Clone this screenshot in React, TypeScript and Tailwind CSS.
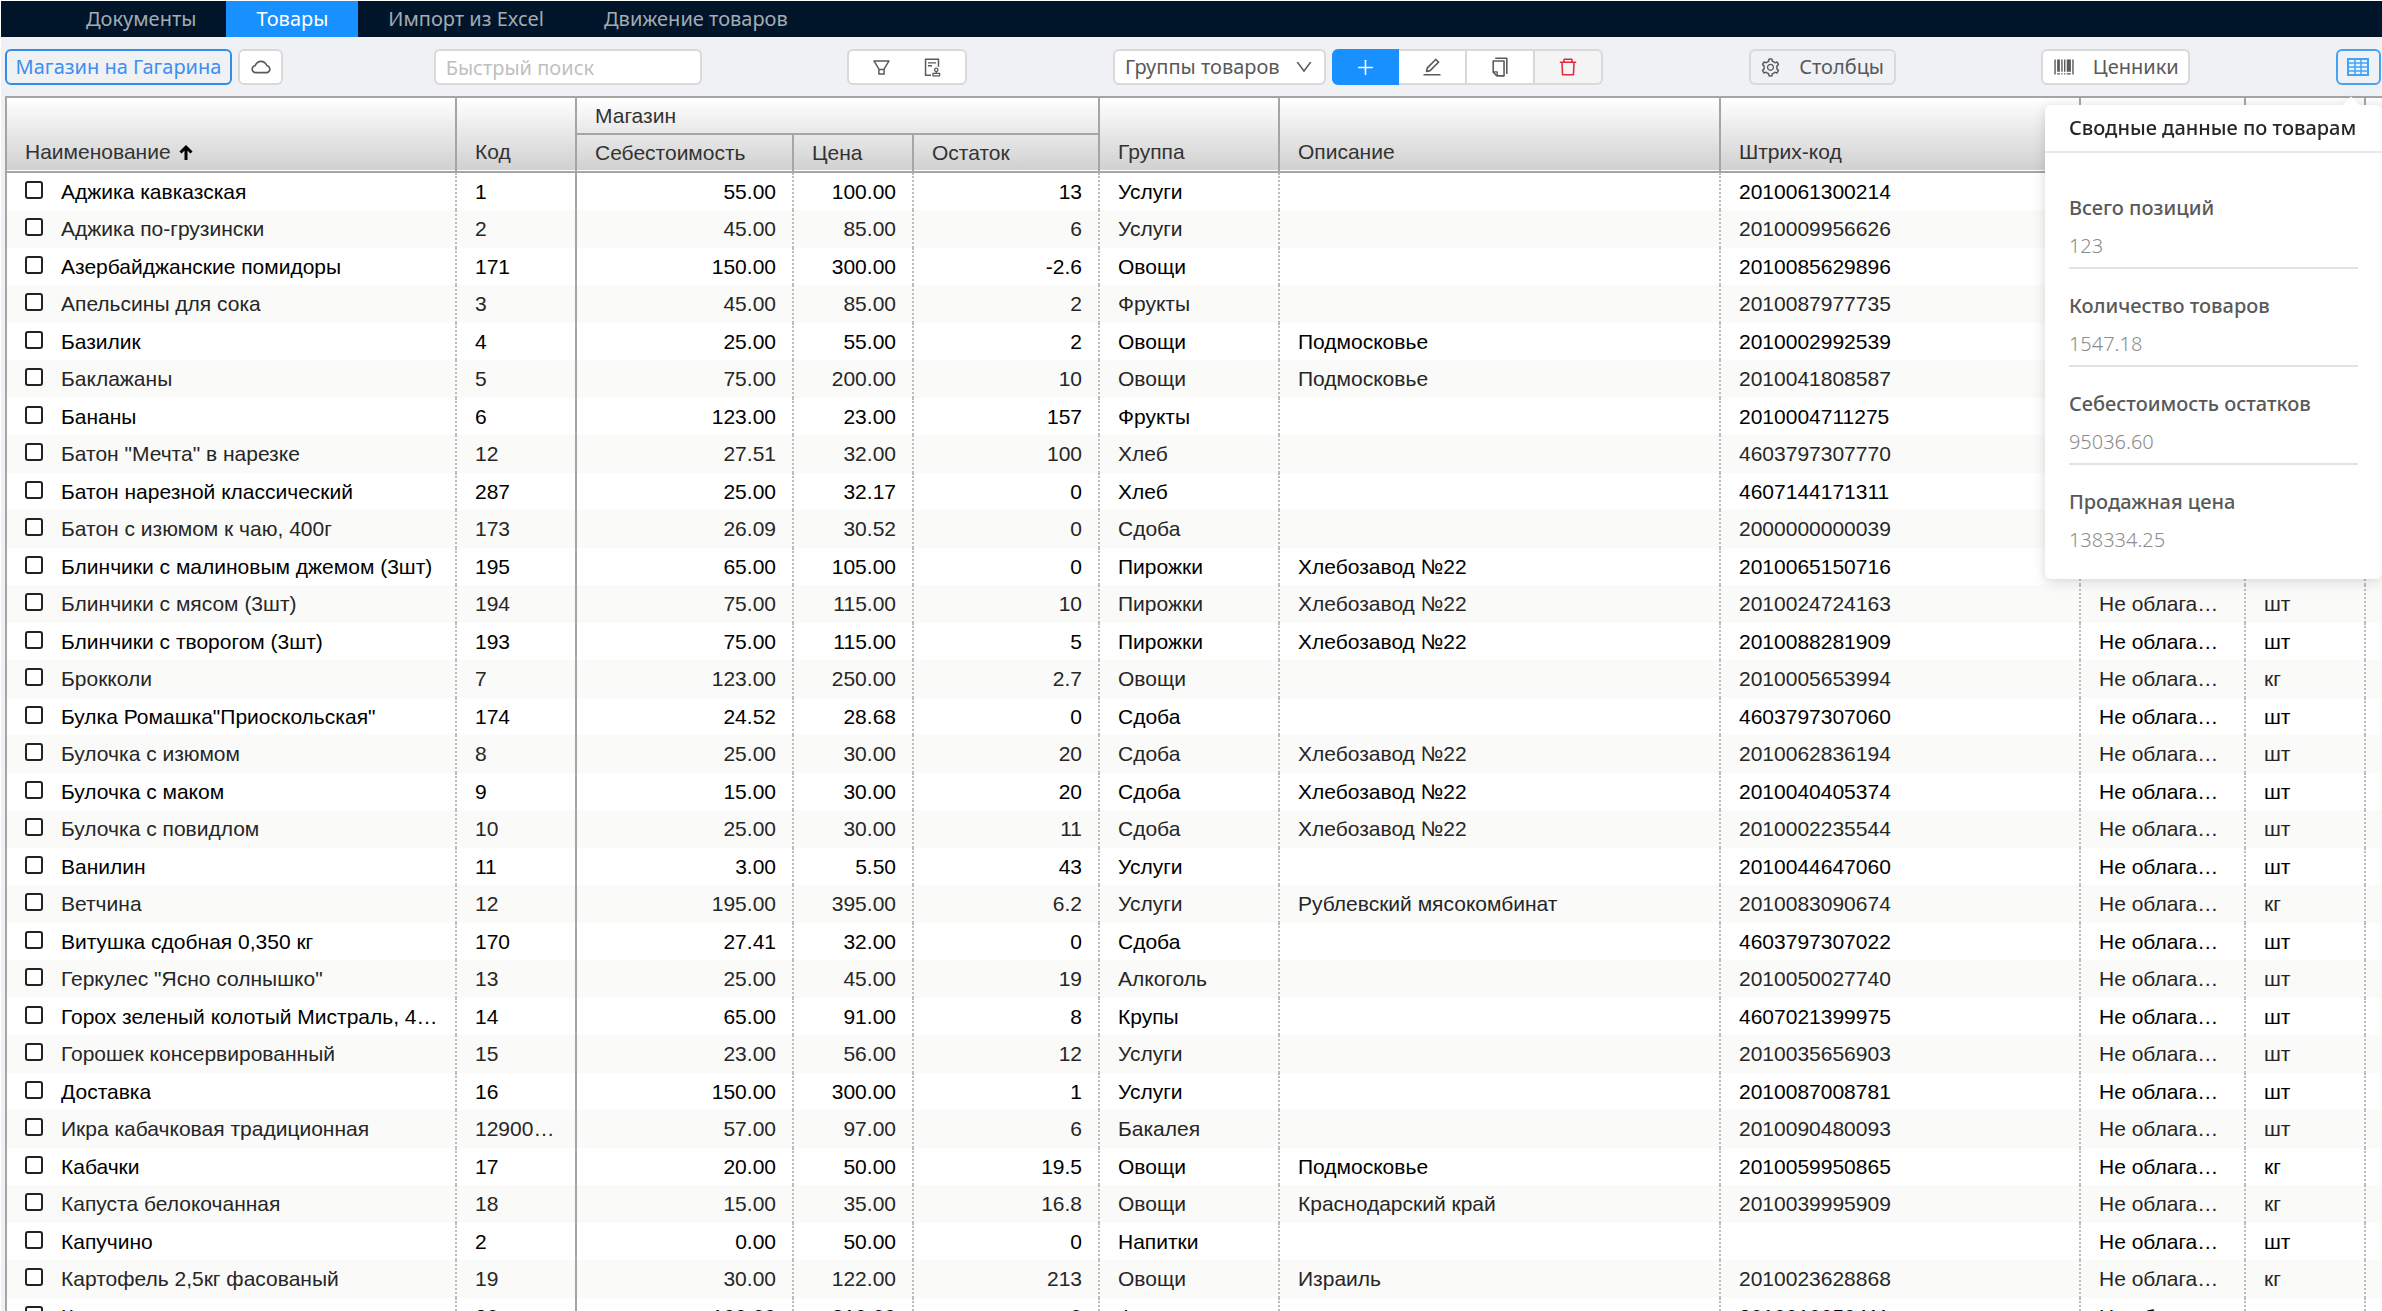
import { ReactNode } from "react";
import clsx from "clsx";
import {
  AiOutlineAudit,
  AiOutlineBarcode,
  AiOutlineCloud,
  AiOutlineCopy,
  AiOutlineDelete,
  AiOutlineDown,
  AiOutlineEdit,
  AiOutlineFilter,
  AiOutlinePlus,
  AiOutlineSetting,
} from "react-icons/ai";

type Product = [
  name: string,
  code: string,
  cost: string,
  price: string,
  stock: string,
  group: string,
  description: string,
  barcode: string,
  unit: string,
];

const products: Product[] = [
  ["Аджика кавказская", "1", "55.00", "100.00", "13", "Услуги", "", "2010061300214", "шт"],
  ["Аджика по-грузински", "2", "45.00", "85.00", "6", "Услуги", "", "2010009956626", "шт"],
  ["Азербайджанские помидоры", "171", "150.00", "300.00", "-2.6", "Овощи", "", "2010085629896", "кг"],
  ["Апельсины для сока", "3", "45.00", "85.00", "2", "Фрукты", "", "2010087977735", "кг"],
  ["Базилик", "4", "25.00", "55.00", "2", "Овощи", "Подмосковье", "2010002992539", "шт"],
  ["Баклажаны", "5", "75.00", "200.00", "10", "Овощи", "Подмосковье", "2010041808587", "кг"],
  ["Бананы", "6", "123.00", "23.00", "157", "Фрукты", "", "2010004711275", "кг"],
  ["Батон \"Мечта\" в нарезке", "12", "27.51", "32.00", "100", "Хлеб", "", "4603797307770", "шт"],
  ["Батон нарезной классический", "287", "25.00", "32.17", "0", "Хлеб", "", "4607144171311", "шт"],
  ["Батон с изюмом к чаю, 400г", "173", "26.09", "30.52", "0", "Сдоба", "", "2000000000039", "шт"],
  ["Блинчики с малиновым джемом (3шт)", "195", "65.00", "105.00", "0", "Пирожки", "Хлебозавод №22", "2010065150716", "шт"],
  ["Блинчики с мясом (3шт)", "194", "75.00", "115.00", "10", "Пирожки", "Хлебозавод №22", "2010024724163", "шт"],
  ["Блинчики с творогом (3шт)", "193", "75.00", "115.00", "5", "Пирожки", "Хлебозавод №22", "2010088281909", "шт"],
  ["Брокколи", "7", "123.00", "250.00", "2.7", "Овощи", "", "2010005653994", "кг"],
  ["Булка Ромашка\"Приоскольская\"", "174", "24.52", "28.68", "0", "Сдоба", "", "4603797307060", "шт"],
  ["Булочка с изюмом", "8", "25.00", "30.00", "20", "Сдоба", "Хлебозавод №22", "2010062836194", "шт"],
  ["Булочка с маком", "9", "15.00", "30.00", "20", "Сдоба", "Хлебозавод №22", "2010040405374", "шт"],
  ["Булочка с повидлом", "10", "25.00", "30.00", "11", "Сдоба", "Хлебозавод №22", "2010002235544", "шт"],
  ["Ванилин", "11", "3.00", "5.50", "43", "Услуги", "", "2010044647060", "шт"],
  ["Ветчина", "12", "195.00", "395.00", "6.2", "Услуги", "Рублевский мясокомбинат", "2010083090674", "кг"],
  ["Витушка сдобная 0,350 кг", "170", "27.41", "32.00", "0", "Сдоба", "", "4603797307022", "шт"],
  ["Геркулес \"Ясно солнышко\"", "13", "25.00", "45.00", "19", "Алкоголь", "", "2010050027740", "шт"],
  ["Горох зеленый колотый Мистраль, 450г", "14", "65.00", "91.00", "8", "Крупы", "", "4607021399975", "шт"],
  ["Горошек консервированный", "15", "23.00", "56.00", "12", "Услуги", "", "2010035656903", "шт"],
  ["Доставка", "16", "150.00", "300.00", "1", "Услуги", "", "2010087008781", "шт"],
  ["Икра кабачковая традиционная", "12900451", "57.00", "97.00", "6", "Бакалея", "", "2010090480093", "шт"],
  ["Кабачки", "17", "20.00", "50.00", "19.5", "Овощи", "Подмосковье", "2010059950865", "кг"],
  ["Капуста белокочанная", "18", "15.00", "35.00", "16.8", "Овощи", "Краснодарский край", "2010039995909", "кг"],
  ["Капучино", "2", "0.00", "50.00", "0", "Напитки", "", "", "шт"],
  ["Картофель 2,5кг фасованый", "19", "30.00", "122.00", "213", "Овощи", "Израиль", "2010023628868", "кг"],
  ["Киви", "20", "100.00", "210.00", "0", "Фрукты", "", "2010010050411", "кг"],
];

const tabs = ["Документы", "Товары", "Импорт из Excel", "Движение товаров"];

const summary = [
  ["Всего позиций", "123"],
  ["Количество товаров", "1547.18"],
  ["Себестоимость остатков", "95036.60"],
  ["Продажная цена", "138334.25"],
];

function TopMenu() {
  return (
    <nav className="flex h-9 shrink-0 bg-[#001529] pl-[55px] text-[20px] leading-9">
      {tabs.map((tab) => (
        <a
          key={tab}
          href="#"
          className={clsx("px-[30px]", tab === "Товары" ? "bg-[#1890ff] text-white" : "text-[#a3abb3]")}
        >
          {tab}
        </a>
      ))}
    </nav>
  );
}

function TableIcon() {
  return (
    <svg viewBox="0 0 22 18" className="h-[18px] w-[22px]" fill="#e6f4ff" stroke="currentColor" strokeWidth="2">
      <rect x="1" y="1" width="20" height="16" />
      <path d="M1 5h20M1 9h20M1 13h20M8 1v16M14 1v16" strokeWidth="1.500" />
    </svg>
  );
}

function ToolButton({ label, className, children }: { label?: string; className?: string; children: ReactNode }) {
  return (
    <button
      type="button"
      aria-label={label}
      className={clsx("flex h-9 items-center justify-center border-2", className)}
    >
      {children}
    </button>
  );
}

function Toolbar() {
  return (
    <div className="flex h-[59px] shrink-0 items-center justify-between pt-px pr-px pl-1 text-[20px] text-[#595959]">
      <div className="flex w-[283px] gap-1.5">
        <ToolButton className="w-[227px] rounded-md border-[#2f8fe6] text-[#3d8ff0]">Магазин на Гагарина</ToolButton>
        <ToolButton label="Облако" className="w-[45px] rounded-md border-[#d9d9d9] bg-white">
          <AiOutlineCloud size={22} />
        </ToolButton>
      </div>

      <input
        type="text"
        aria-label="Быстрый поиск"
        placeholder="Быстрый поиск"
        className="h-9 w-[268px] rounded-md border-2 border-[#d9d9d9] bg-white px-2.5 placeholder:text-[#bfbfbf]"
      />

      <div className="flex h-9 w-[120px] items-center justify-center gap-[30px] rounded-md border-2 border-[#d9d9d9] bg-white">
        <button type="button" aria-label="Фильтр">
          <AiOutlineFilter size={21} />
        </button>
        <button type="button" aria-label="Ревизия">
          <AiOutlineAudit size={21} />
        </button>
      </div>

      <div className="flex gap-1.5">
        <div className="relative">
          <select
            aria-label="Группы товаров"
            className="h-9 w-[213px] appearance-none rounded-md border-2 border-[#d9d9d9] bg-white px-2.5"
          >
            <option>Группы товаров</option>
          </select>
          <AiOutlineDown size={20} className="pointer-events-none absolute top-2 right-3" />
        </div>
        <div className="flex">
          <ToolButton label="Добавить" className="w-[67px] rounded-l-md border-[#1890ff] bg-[#1890ff] text-white">
            <AiOutlinePlus size={21} />
          </ToolButton>
          <ToolButton label="Изменить" className="w-[68px] border-l-0 border-[#d9d9d9] bg-white">
            <AiOutlineEdit size={22} />
          </ToolButton>
          <ToolButton label="Копировать" className="w-[68px] border-l-0 border-[#d9d9d9] bg-white">
            <AiOutlineCopy size={22} />
          </ToolButton>
          <ToolButton label="Удалить" className="w-[68px] rounded-r-md border-l-0 border-[#d9d9d9] bg-[#f4f4f4] text-[#e0283c]">
            <AiOutlineDelete size={22} />
          </ToolButton>
        </div>
      </div>

      <ToolButton className="w-[147px] gap-[18px] rounded-md border-[#d9d9d9]">
        <AiOutlineSetting size={21} />
        Столбцы
      </ToolButton>

      <ToolButton className="w-[149px] gap-[18px] rounded-md border-[#d9d9d9] bg-white">
        <AiOutlineBarcode size={22} />
        Ценники
      </ToolButton>

      <div className="relative">
        <ToolButton label="Сводные данные" className="w-[45px] rounded-md border-[#46a3f2] text-[#46a3f2]">
          <TableIcon />
        </ToolButton>
        <SummaryPopover />
      </div>
    </div>
  );
}

function SummaryPopover() {
  return (
    <div className="absolute top-14 -right-px z-10 w-[337px] rounded-md bg-white drop-shadow-[0_3px_6px_rgba(0,0,0,0.16)]">
      <div className="absolute -top-1.5 right-[25px] size-3 rotate-45 bg-white" />
      <h2 className="relative border-b-2 border-[#e8e8e8] px-6 text-[20px] leading-[46px] font-medium whitespace-nowrap text-[#262626]">
        Сводные данные по товарам
      </h2>
      <dl className="divide-y-2 divide-[#e3e3e3] px-6 pt-[18px] pb-4">
        {summary.map(([label, value]) => (
          <div key={label} className="h-[98px] pt-[18px]">
            <dt className="leading-[37px] font-medium">{label}</dt>
            <dd className="leading-[39px] font-light text-[#8c8c8c]">{value}</dd>
          </div>
        ))}
      </dl>
    </div>
  );
}

const headLine = "border-r-2 border-b-2 border-[#a5a5a5] px-[18px] text-left font-normal";
const fullHead = clsx(
  headLine,
  "bg-linear-to-b from-white to-[#d0d0d0] pb-px align-bottom leading-[36px] shadow-[inset_0_-1px_0_#fff]",
);
const subHead = clsx(headLine, "bg-linear-to-b from-[#e8e8e8] to-[#d0d0d0] shadow-[inset_0_-1px_0_#fff]");

function ProductRow({ product, striped }: { product: Product; striped: boolean }) {
  const [name, code, cost, price, stock, group, description, barcode, unit] = product;
  const cell = "truncate border-r-2 border-dotted border-[#bdbdbd] pr-4 pl-[18px]";
  const number = clsx(cell, "text-right");

  return (
    <tr className={striped ? "h-[38px] bg-[#fafaf9] text-[#262626]" : "h-[37px] bg-white text-black"}>
      <td className={cell}>
        <label className="flex items-center gap-[18px]">
          <input
            type="checkbox"
            className="-mt-1 size-[18px] shrink-0 appearance-none rounded-[3px] border-2 border-[#222] bg-white"
          />
          <span className="truncate">{name}</span>
        </label>
      </td>
      <td className="truncate border-r-2 border-[#a5a5a5] pr-4 pl-[18px]">{code}</td>
      <td className={number}>{cost}</td>
      <td className={number}>{price}</td>
      <td className={number}>{stock}</td>
      <td className={cell}>{group}</td>
      <td className={cell}>{description}</td>
      <td className={cell}>{barcode}</td>
      <td className={cell}>Не облагается НДС</td>
      <td className={cell}>{unit}</td>
      <td />
    </tr>
  );
}

function ProductTable() {
  return (
    <table className="w-full table-fixed border-separate border-spacing-0 border-t-2 border-l-2 border-[#a5a5a5] bg-white font-['Liberation_Sans',sans-serif] text-[21px] leading-[36px]">
      <colgroup>
        <col className="w-[450px]" />
        <col className="w-[120px]" />
        <col className="w-[217px]" />
        <col className="w-[120px]" />
        <col className="w-[186px]" />
        <col className="w-[180px]" />
        <col />
        <col className="w-[360px]" />
        <col className="w-[165px]" />
        <col className="w-[120px]" />
        <col className="w-4" />
      </colgroup>
      <thead className="text-[#333]">
        <tr className="h-[37px]">
          <th rowSpan={2} className={fullHead}>
            <span className="flex items-center gap-2">
              Наименование
              <svg viewBox="0 0 14 16" className="h-4 w-3.5" fill="none" stroke="#000" strokeWidth="3">
                <path d="M7 16V3M1.5 8.5 7 3l5.500 5.500" />
              </svg>
            </span>
          </th>
          <th rowSpan={2} className={fullHead}>Код</th>
          <th colSpan={3} className={clsx(headLine, "bg-linear-to-b from-white to-[#e8e8e8] leading-[35px]")}>
            Магазин
          </th>
          <th rowSpan={2} className={fullHead}>Группа</th>
          <th rowSpan={2} className={fullHead}>Описание</th>
          <th rowSpan={2} className={fullHead}>Штрих-код</th>
          <th rowSpan={2} className={fullHead} />
          <th rowSpan={2} className={fullHead} />
          <th rowSpan={2} className="border-b-2 border-[#a5a5a5] bg-linear-to-b from-white to-[#d0d0d0]" />
        </tr>
        <tr className="h-[38px]">
          <th className={subHead}>Себестоимость</th>
          <th className={subHead}>Цена</th>
          <th className={subHead}>Остаток</th>
        </tr>
      </thead>
      <tbody>
        {products.map((product, index) => (
          <ProductRow key={index} product={product} striped={index % 2 === 1} />
        ))}
      </tbody>
    </table>
  );
}

export default function App() {
  return (
    <div className="flex h-screen flex-col overflow-hidden border-t border-l border-white bg-[#eff1f5] font-['Noto_Sans',sans-serif]">
      <TopMenu />
      <Toolbar />
      <main className="pl-1">
        <ProductTable />
      </main>
    </div>
  );
}
